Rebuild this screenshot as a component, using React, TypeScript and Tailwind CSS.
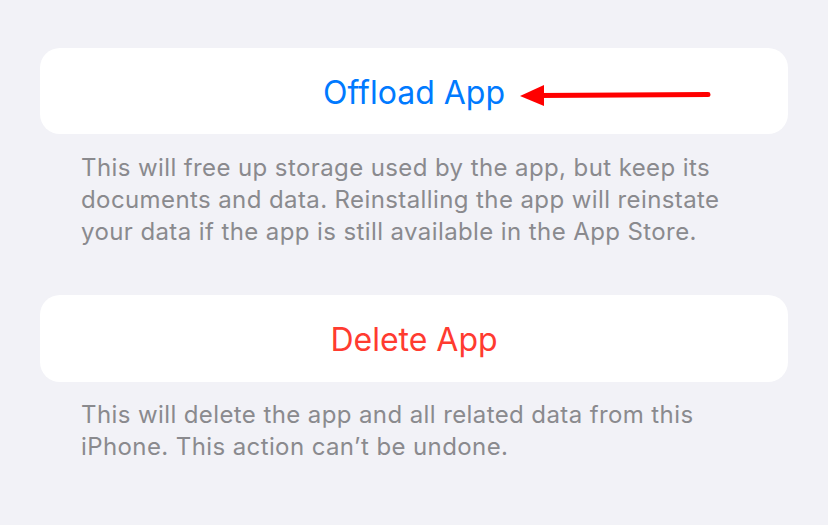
export default function App() {
  return (
    <div className="min-h-screen w-full bg-[#f2f2f7] px-10 pt-12 font-['Inter',sans-serif]">
      <div className="relative flex h-[86px] items-center justify-center rounded-[20px] bg-white">
        <span className="pt-[3px] text-[32px] leading-none text-[#007aff]">Offload App</span>
        <svg className="absolute left-[478px] top-[36px]" width="194" height="24" viewBox="0 0 194 24">
          <line x1="20" y1="11.5" x2="190" y2="10.5" stroke="#ff0000" strokeWidth="5" strokeLinecap="round" />
          <polygon points="2,12 26,1 26,22" fill="#ff0000" />
        </svg>
      </div>
      <p className="mt-[18px] pl-[41px] text-[24px] leading-[32px] tracking-[0.4px] text-[#8a8a8e]">
        This will free up storage used by the app, but keep its
        <br />
        documents and data. Reinstalling the app will reinstate
        <br />
        your data if the app is still available in the App Store.
      </p>
      <div className="mt-[47px] flex h-[87px] items-center justify-center rounded-[20px] bg-white">
        <span className="pt-[2px] text-[32px] leading-none text-[#ff3b30]">Delete App</span>
      </div>
      <p className="mt-[17px] pl-[41px] text-[24px] leading-[32px] tracking-[0.4px] text-[#8a8a8e]">
        This will delete the app and all related data from this
        <br />
        iPhone. This action can’t be undone.
      </p>
    </div>
  );
}
